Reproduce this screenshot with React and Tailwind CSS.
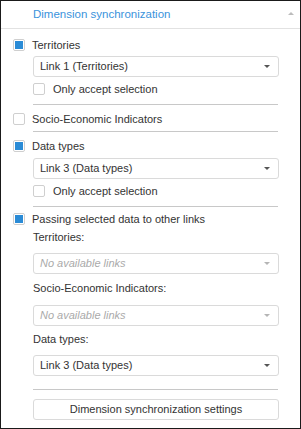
import React from 'react';

function Check({ checked }) {
  return (
    <span className="w-[12px] h-[12px] shrink-0 rounded-[2px] border border-[#cfcfcf] bg-white flex items-center justify-center">
      {checked && <span className="w-[8px] h-[8px] bg-[#2a8bd6]" />}
    </span>
  );
}

function Arrow({ disabled }) {
  return (
    <span
      className={`w-0 h-0 border-l-[3.5px] border-r-[3.5px] border-t-[3px] border-l-transparent border-r-transparent ${
        disabled ? 'border-t-[#b5b5b5]' : 'border-t-[#555]'
      }`}
    />
  );
}

function Select({ value, disabled, className = '' }) {
  return (
    <div
      className={`ml-[32px] w-[246px] h-[21px] rounded-[3px] border border-[#dadada] bg-white flex items-center justify-between pl-[6px] pr-[8px] ${className}`}
    >
      <span className={disabled ? 'italic text-[#aaaaaa]' : 'text-[#333]'}>{value}</span>
      <Arrow disabled={disabled} />
    </div>
  );
}

function Sep({ className = '' }) {
  return <div className={`ml-[32px] w-[245px] h-px bg-[#c8c8c8] ${className}`} />;
}

function CheckRow({ label, checked, className = '' }) {
  return (
    <div className={`pl-[12px] h-[12px] flex items-center gap-[7px] ${className}`}>
      <Check checked={checked} />
      <span className="text-[#333] leading-none">{label}</span>
    </div>
  );
}

function SubCheck({ label, className = '' }) {
  return (
    <div className={`pl-[32px] h-[12px] flex items-center gap-[8px] ${className}`}>
      <Check />
      <span className="text-[#333] leading-none">{label}</span>
    </div>
  );
}

function Label({ text, className = '' }) {
  return <div className={`pl-[32px] h-[14px] flex items-center text-[#333] ${className}`}>{text}</div>;
}

export default function App() {
  return (
    <div
      className="w-[301px] h-[429px] bg-white border border-[#1a1a1a] text-[11px]"
      style={{ fontFamily: '"Liberation Sans", Arial, sans-serif' }}
    >
      {/* header */}
      <div className="h-[28px] border-b border-[#e2e2e2] flex items-center justify-between pl-[32px] pr-[6px]">
        <span className="text-[#3a93dc] text-[11.5px]">Dimension synchronization</span>
        <span className="w-0 h-0 border-l-[3px] border-r-[3px] border-b-[3px] border-l-transparent border-r-transparent border-b-[#bcbcbc] mb-[2px]" />
      </div>

      <CheckRow label="Territories" checked className="mt-[10px]" />
      <Select value="Link 1 (Territories)" className="mt-[5px]" />
      <SubCheck label="Only accept selection" className="mt-[6px]" />
      <Sep className="mt-[9px]" />

      <CheckRow label="Socio-Economic Indicators" className="mt-[8px]" />
      <Sep className="mt-[6px]" />

      <CheckRow label="Data types" checked className="mt-[8px]" />
      <Select value="Link 3 (Data types)" className="mt-[6px]" />
      <SubCheck label="Only accept selection" className="mt-[6px]" />
      <Sep className="mt-[9px]" />

      <CheckRow label="Passing selected data to other links" checked className="mt-[6px]" />
      <Label text="Territories:" className="mt-[5px]" />
      <Select value="No available links" disabled className="mt-[9px]" />
      <Label text="Socio-Economic Indicators:" className="mt-[7px]" />
      <Select value="No available links" disabled className="mt-[10px]" />
      <Label text="Data types:" className="mt-[6px]" />
      <Select value="Link 3 (Data types)" className="mt-[9px]" />
      <Sep className="mt-[13px]" />

      <button className="mt-[9px] ml-[32px] w-[246px] h-[21px] rounded-[3px] border border-[#dadada] bg-white text-[#333] flex items-center justify-center">
        Dimension synchronization settings
      </button>
    </div>
  );
}
